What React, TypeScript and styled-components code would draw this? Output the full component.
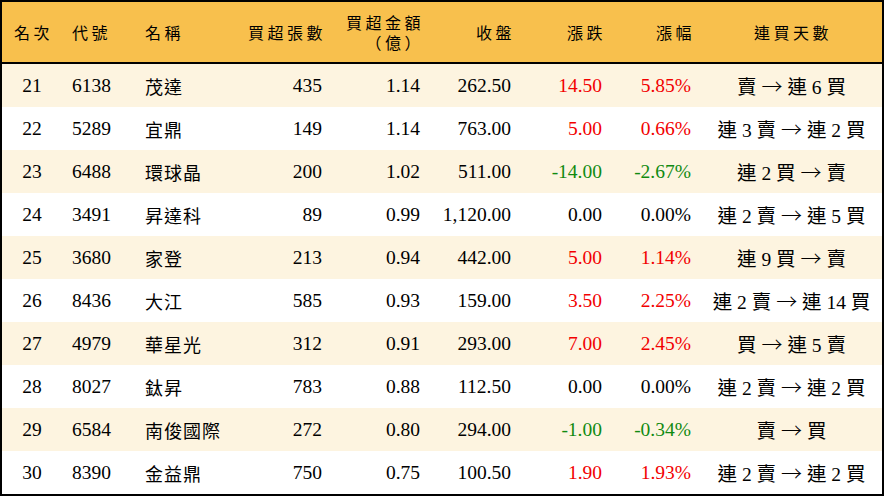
import React from 'react';
import styled, { createGlobalStyle } from 'styled-components';

const GlobalStyle = createGlobalStyle`
    html, body {
        margin: 0;
        padding: 0;
        background: #ffffff;
    }
    * {
        box-sizing: border-box;
    }
`;

type Align = 'left' | 'right' | 'center';
type Trend = 'up' | 'down' | 'flat';

interface Row {
    rank: number;
    code: string;
    name: string;
    lots: string;
    amount: string;
    close: string;
    change: string;
    pct: string;
    streak: string;
    trend: Trend;
}

const rows: Row[] = [
    { rank: 21, code: '6138', name: '茂達', lots: '435', amount: '1.14', close: '262.50', change: '14.50', pct: '5.85%', streak: '賣 → 連 6 買', trend: 'up' },
    { rank: 22, code: '5289', name: '宜鼎', lots: '149', amount: '1.14', close: '763.00', change: '5.00', pct: '0.66%', streak: '連 3 賣 → 連 2 買', trend: 'up' },
    { rank: 23, code: '6488', name: '環球晶', lots: '200', amount: '1.02', close: '511.00', change: '-14.00', pct: '-2.67%', streak: '連 2 買 → 賣', trend: 'down' },
    { rank: 24, code: '3491', name: '昇達科', lots: '89', amount: '0.99', close: '1,120.00', change: '0.00', pct: '0.00%', streak: '連 2 賣 → 連 5 買', trend: 'flat' },
    { rank: 25, code: '3680', name: '家登', lots: '213', amount: '0.94', close: '442.00', change: '5.00', pct: '1.14%', streak: '連 9 買 → 賣', trend: 'up' },
    { rank: 26, code: '8436', name: '大江', lots: '585', amount: '0.93', close: '159.00', change: '3.50', pct: '2.25%', streak: '連 2 賣 → 連 14 買', trend: 'up' },
    { rank: 27, code: '4979', name: '華星光', lots: '312', amount: '0.91', close: '293.00', change: '7.00', pct: '2.45%', streak: '買 → 連 5 賣', trend: 'up' },
    { rank: 28, code: '8027', name: '鈦昇', lots: '783', amount: '0.88', close: '112.50', change: '0.00', pct: '0.00%', streak: '連 2 賣 → 連 2 買', trend: 'flat' },
    { rank: 29, code: '6584', name: '南俊國際', lots: '272', amount: '0.80', close: '294.00', change: '-1.00', pct: '-0.34%', streak: '賣 → 買', trend: 'down' },
    { rank: 30, code: '8390', name: '金益鼎', lots: '750', amount: '0.75', close: '100.50', change: '1.90', pct: '1.93%', streak: '連 2 賣 → 連 2 買', trend: 'up' },
];

const trendColor: Record<Trend, string> = {
    up: '#f20000',
    down: '#108a10',
    flat: '#000000',
};

const columns = '60px 73px 100px 97px 98px 91px 91px 89px 1fr';

const Board = styled.div`
    width: 884px;
    height: 496px;
    border: 2px solid #000000;
    background: #ffffff;
    font-family: "Liberation Serif", "Noto Sans CJK TC", serif;
    color: #000000;
`;

const HeaderRow = styled.div`
    display: grid;
    grid-template-columns: ${columns};
    height: 62px;
    background: #f8c04d;
    border-bottom: 2px solid #000000;
`;

interface CellProps {
    $align: Align;
}

const HeadCell = styled.div<CellProps>`
    display: flex;
    flex-direction: column;
    justify-content: center;
    align-items: ${(p) => (p.$align === 'left' ? 'flex-start' : p.$align === 'right' ? 'flex-end' : 'center')};
    padding: ${(p) => (p.$align === 'left' ? '0 0 0 10px' : p.$align === 'right' ? '0 6px 0 0' : '0 0 0 3px')};
    font-family: "Noto Sans CJK TC", serif;
    font-size: 16px;
    letter-spacing: 3.5px;
    line-height: 20px;
`;

const HeadLine = styled.span`
    display: block;
    line-height: 20px;
`;

interface DataRowProps {
    $striped: boolean;
}

const DataRow = styled.div<DataRowProps>`
    display: grid;
    grid-template-columns: ${columns};
    height: 43px;
    background: ${(p) => (p.$striped ? '#fdf4e0' : '#ffffff')};
`;

interface DataCellProps extends CellProps {
    $color?: string;
}

const DataCell = styled.div<DataCellProps>`
    display: flex;
    align-items: center;
    justify-content: ${(p) => (p.$align === 'left' ? 'flex-start' : p.$align === 'right' ? 'flex-end' : 'center')};
    padding: ${(p) => (p.$align === 'left' ? '0 0 0 10px' : p.$align === 'right' ? '0 10px 0 0' : '0')};
    font-size: 19.5px;
    white-space: nowrap;
    color: ${(p) => p.$color || '#000000'};
`;

const NameText = styled.span`
    font-size: 18px;
    letter-spacing: 1px;
`;

const StreakText = styled.span`
    white-space: pre;
`;

const Arrow = styled.span`
    font-family: "Noto Sans CJK TC", sans-serif;
    font-size: 21px;
    font-weight: 300;
    line-height: 1;
`;

function Streak({ text }: { text: string }) {
    const [before, after] = text.split('→');
    return (
        <StreakText>
            {before}
            <Arrow>→</Arrow>
            {after}
        </StreakText>
    );
}

function StockRow({ row, striped }: { row: Row; striped: boolean }) {
    const color = trendColor[row.trend];
    return (
        <DataRow $striped={striped}>
            <DataCell $align="center">{row.rank}</DataCell>
            <DataCell $align="left">{row.code}</DataCell>
            <DataCell $align="left">
                <NameText>{row.name}</NameText>
            </DataCell>
            <DataCell $align="right">{row.lots}</DataCell>
            <DataCell $align="right">{row.amount}</DataCell>
            <DataCell $align="right">{row.close}</DataCell>
            <DataCell $align="right" $color={color}>{row.change}</DataCell>
            <DataCell $align="right" $color={color}>{row.pct}</DataCell>
            <DataCell $align="center">
                <Streak text={row.streak} />
            </DataCell>
        </DataRow>
    );
}

export default function App() {
    return (
        <>
            <GlobalStyle />
            <Board>
                <HeaderRow>
                    <HeadCell $align="center">名次</HeadCell>
                    <HeadCell $align="left">代號</HeadCell>
                    <HeadCell $align="left">名稱</HeadCell>
                    <HeadCell $align="right">買超張數</HeadCell>
                    <HeadCell $align="right">
                        <HeadLine>買超金額</HeadLine>
                        <HeadLine>（億）</HeadLine>
                    </HeadCell>
                    <HeadCell $align="right">收盤</HeadCell>
                    <HeadCell $align="right">漲跌</HeadCell>
                    <HeadCell $align="right">漲幅</HeadCell>
                    <HeadCell $align="center">連買天數</HeadCell>
                </HeaderRow>
                {rows.map((row, i) => (
                    <StockRow key={row.rank} row={row} striped={i % 2 === 0} />
                ))}
            </Board>
        </>
    );
}
